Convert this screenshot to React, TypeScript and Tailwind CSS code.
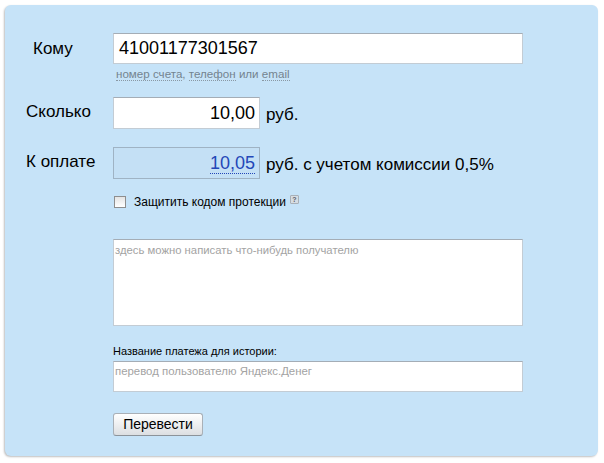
import React from "react";

function Dotted({ children }: { children: React.ReactNode }) {
  return <span className="border-b border-dotted border-[#8a98a4]">{children}</span>;
}

export default function App() {
  return (
    <div className="w-[604px] h-[463px] bg-white pt-[5px] pl-[5px] font-['Liberation_Sans',Arial,sans-serif]">
      <div className="w-[593px] h-[451px] rounded-[6px] bg-[#c6e3f8] shadow-[-1px_1px_2px_rgba(0,0,0,0.25)] pt-[28px]">
        {/* Кому */}
        <div className="flex">
          <div className="w-[108px] pl-[28px] pt-[3px] text-[17px] text-black">Кому</div>
          <div>
            <div className="w-[410px] h-[31px] bg-white border border-[#c3ccd4] border-t-[#a4adb6] flex items-center pl-[5px] text-[18px] text-black">
              41001177301567
            </div>
            <div className="mt-[3px] pl-[3px] text-[11.6px] text-[#74838f] leading-[14px]">
              <Dotted>номер счета</Dotted>, <Dotted>телефон</Dotted> или <Dotted>email</Dotted>
            </div>
          </div>
        </div>

        {/* Сколько */}
        <div className="flex mt-[16px]">
          <div className="w-[108px] pl-[21px] pt-[2px] text-[17px] text-black">Сколько</div>
          <div className="w-[147px] h-[32px] bg-white border border-[#c3ccd4] border-t-[#a4adb6] flex items-center justify-end pr-[4px] text-[18px] text-black">
            10,00
          </div>
          <div className="pl-[6px] pt-[5px] text-[17px] text-black">руб.</div>
        </div>

        {/* К оплате */}
        <div className="flex mt-[18px]">
          <div className="w-[108px] pl-[21px] pt-[2px] text-[17px] text-black">К оплате</div>
          <div className="w-[147px] h-[32px] bg-[#c4e0f5] border border-[#9fb3c4] flex items-center justify-end pr-[4px] text-[18px] text-[#2347b8]">
            <span className="border-b border-dotted border-[#2347b8] leading-[20px]">10,05</span>
          </div>
          <div className="pl-[6px] pt-[5px] text-[17px] text-black">руб. с учетом комиссии 0,5%</div>
        </div>

        {/* Защитить */}
        <div className="flex items-center mt-[14px] pl-[109px]">
          <div className="w-[12px] h-[12px] bg-gradient-to-b from-[#e4e4e4] to-white border border-[#8e8e8e]" />
          <div className="ml-[8px] text-[12px] text-black">Защитить кодом протекции</div>
          <div className="ml-[4px] -mt-[6px] w-[9px] h-[9px] rounded-[1px] bg-[#d6dde3] border border-[#a8b0b8] text-[7px] leading-[7px] text-[#56606a] flex items-center justify-center font-bold">
            ?
          </div>
        </div>

        {/* textarea */}
        <div className="mt-[28px] ml-[108px] w-[410px] h-[87px] bg-white border border-[#c3ccd4] border-t-[#a4adb6] pl-[1px] pt-[2px] text-[11.3px] text-[#a3a3a3]">
          здесь можно написать что-нибудь получателю
        </div>

        {/* Название */}
        <div className="mt-[18px] ml-[108px] text-[11px] text-black leading-[14px]">Название платежа для истории:</div>
        <div className="mt-[3px] ml-[108px] w-[410px] h-[31px] bg-white border border-[#c3ccd4] border-t-[#a4adb6] pl-[1px] pt-[1px] text-[11.4px] text-[#a3a3a3]">
          перевод пользователю Яндекс.Денег
        </div>

        {/* Button */}
        <div className="mt-[20px] ml-[108px]">
          <button className="w-[90px] h-[23px] rounded-[3px] border border-[#a9b0b7] border-b-[#8c939a] bg-gradient-to-b from-white to-[#dcdfe2] text-[14px] text-black">
            Перевести
          </button>
        </div>
      </div>
    </div>
  );
}
